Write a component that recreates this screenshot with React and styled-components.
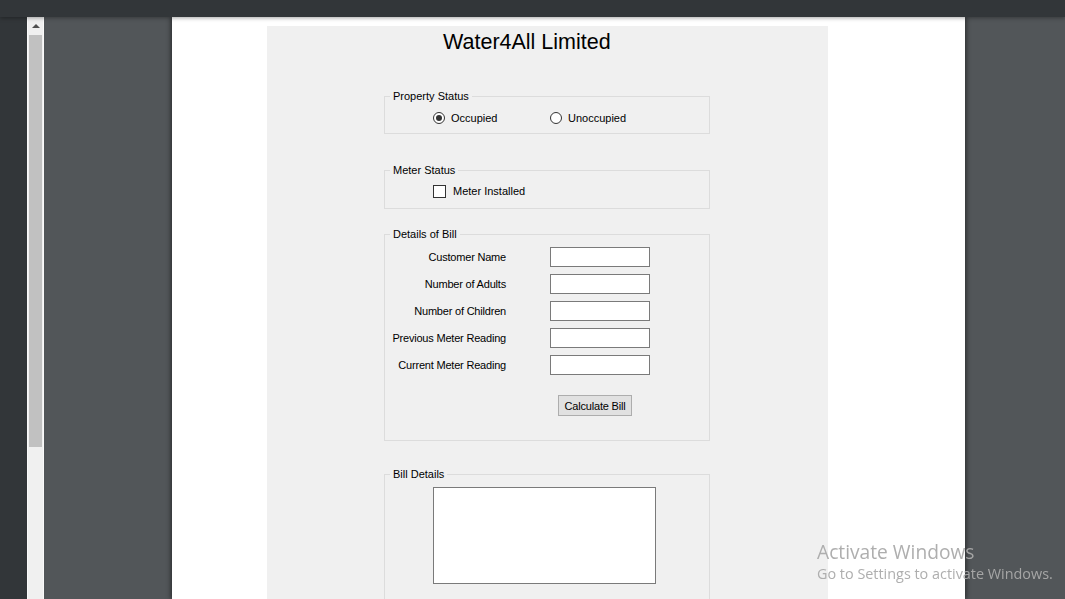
import React from "react";
import styled, { createGlobalStyle } from "styled-components";

const GlobalStyle = createGlobalStyle`
  html, body {
    margin: 0;
    padding: 0;
    height: 100%;
    overflow: hidden;
    background: #323639;
  }
  #root {
    height: 100%;
  }
  * {
    box-sizing: border-box;
  }
`;

const Viewer = styled.div`
  display: flex;
  flex-direction: column;
  height: 100vh;
  background: #323639;
`;

const TopBar = styled.div`
  height: 17px;
  flex-shrink: 0;
  background: #323639;
  box-shadow: 0 1px 4px rgba(0, 0, 0, 0.35);
  position: relative;
  z-index: 2;
`;

const Body = styled.div`
  flex: 1;
  display: flex;
  min-height: 0;
`;

const Rail = styled.div`
  width: 27px;
  flex-shrink: 0;
  background: #323639;
`;

const ScrollTrack = styled.div`
  width: 17px;
  flex-shrink: 0;
  background: #f0f0f0;
  border-left: 1px solid #fafafa;
  border-right: 1px solid #fafafa;
  display: flex;
  flex-direction: column;
  align-items: center;
`;

const ScrollArrow = styled.div`
  height: 18px;
  width: 100%;
  display: flex;
  align-items: center;
  justify-content: center;
  &::before {
    content: "";
    border-left: 4px solid transparent;
    border-right: 4px solid transparent;
    border-bottom: 4px solid #505050;
  }
`;

const ScrollThumb = styled.div`
  width: 13px;
  height: 412px;
  background: #c1c1c1;
`;

const Gutter = styled.div`
  flex: 1;
  background: #525659;
  display: flex;
  padding-left: 128px;
`;

const Page = styled.div`
  width: 793px;
  background: #ffffff;
  box-shadow: -2px 0 4px rgba(0, 0, 0, 0.35), 2px 0 4px rgba(0, 0, 0, 0.35);
  padding: 9px 0 0 95px;
`;

const FormShot = styled.div`
  width: 561px;
  height: 100%;
  background: #f0f0f0;
  font-family: "Liberation Sans", Arial, sans-serif;
  font-size: 11px;
  color: #000;
  padding-left: 117px;
  display: flex;
  flex-direction: column;
`;

const Title = styled.h1`
  margin: 4px 0 36px 59px;
  font-family: "Liberation Sans", Arial, sans-serif;
  font-weight: 400;
  font-size: 21.5px;
  line-height: 24px;
  color: #000;
`;

const Group = styled.fieldset`
  width: 326px;
  margin: 0 0 ${(p) => p.$after || 0}px 0;
  padding: ${(p) => p.$pad || "0"};
  border: 1px solid #dcdcdc;
  border-radius: 0;
  min-width: 0;
`;

const Legend = styled.legend`
  margin-left: 5px;
  padding: 0 3px;
  font-size: 11px;
  line-height: 13px;
  color: #000;
`;

const ChoiceRow = styled.div`
  display: flex;
  padding-left: 48px;
  height: 14px;
  align-items: center;
`;

const Choice = styled.label`
  width: ${(p) => p.$w || 117}px;
  display: flex;
  align-items: center;
  gap: 6px;
  line-height: 14px;
`;

const RadioDot = styled.span`
  width: 12px;
  height: 12px;
  border-radius: 50%;
  border: 1px solid #333;
  background: #fff;
  display: flex;
  align-items: center;
  justify-content: center;
  &::after {
    content: "";
    width: 6px;
    height: 6px;
    border-radius: 50%;
    background: ${(p) => (p.$checked ? "#333" : "transparent")};
  }
`;

const CheckBox = styled.span`
  width: 13px;
  height: 13px;
  border: 1px solid #333;
  background: #fff;
  margin-right: 1px;
`;

const FieldGrid = styled.div`
  display: grid;
  grid-template-columns: 121px 100px;
  column-gap: 44px;
  row-gap: 7px;
  align-items: center;
`;

const FieldLabel = styled.span`
  text-align: right;
  white-space: nowrap;
  letter-spacing: -0.2px;
`;

const TextBox = styled.div`
  height: 20px;
  background: #fff;
  border: 1px solid #7a7a7a;
`;

const ButtonRow = styled.div`
  margin-top: 20px;
  padding-left: 173px;
`;

const Button = styled.button`
  width: 74px;
  height: 21px;
  padding: 0;
  background: #e1e1e1;
  border: 1px solid #adadad;
  font-family: "Liberation Sans", Arial, sans-serif;
  font-size: 11px;
  color: #000;
  letter-spacing: -0.2px;
`;

const TextArea = styled.div`
  margin-left: 48px;
  width: 223px;
  height: 97px;
  background: #fff;
  border: 1px solid #7a7a7a;
`;

const Watermark = styled.div`
  position: fixed;
  left: 817px;
  top: 539px;
  font-family: "Open Sans", "Noto Sans", sans-serif;
  color: rgba(170, 170, 170, 0.95);
  pointer-events: none;
`;

const WatermarkTitle = styled.div`
  font-size: 19.2px;
  line-height: 25px;
`;

const WatermarkSub = styled.div`
  font-size: 14.4px;
  line-height: 20px;
`;

const fields = [
  "Customer Name",
  "Number of Adults",
  "Number of Children",
  "Previous Meter Reading",
  "Current Meter Reading",
];

export default function App() {
  return (
    <>
      <GlobalStyle />
      <Viewer>
        <TopBar />
        <Body>
          <Rail />
          <ScrollTrack>
            <ScrollArrow />
            <ScrollThumb />
          </ScrollTrack>
          <Gutter>
            <Page>
              <FormShot>
                <Title>Water4All Limited</Title>

                <Group $after={30} $pad="8px 0 8px 0">
                  <Legend>Property Status</Legend>
                  <ChoiceRow>
                    <Choice>
                      <RadioDot $checked />
                      Occupied
                    </Choice>
                    <Choice>
                      <RadioDot />
                      Unoccupied
                    </Choice>
                  </ChoiceRow>
                </Group>

                <Group $after={19} $pad="7px 0 10px 0">
                  <Legend>Meter Status</Legend>
                  <ChoiceRow>
                    <Choice $w={160}>
                      <CheckBox />
                      Meter Installed
                    </Choice>
                  </ChoiceRow>
                </Group>

                <Group $after={27} $pad="6px 0 24px 0">
                  <Legend>Details of Bill</Legend>
                  <FieldGrid>
                    {fields.map((f) => (
                      <React.Fragment key={f}>
                        <FieldLabel>{f}</FieldLabel>
                        <TextBox />
                      </React.Fragment>
                    ))}
                  </FieldGrid>
                  <ButtonRow>
                    <Button>Calculate Bill</Button>
                  </ButtonRow>
                </Group>

                <Group $pad="6px 0 20px 0">
                  <Legend>Bill Details</Legend>
                  <TextArea />
                </Group>
              </FormShot>
            </Page>
          </Gutter>
        </Body>
      </Viewer>
      <Watermark>
        <WatermarkTitle>Activate Windows</WatermarkTitle>
        <WatermarkSub>Go to Settings to activate Windows.</WatermarkSub>
      </Watermark>
    </>
  );
}
